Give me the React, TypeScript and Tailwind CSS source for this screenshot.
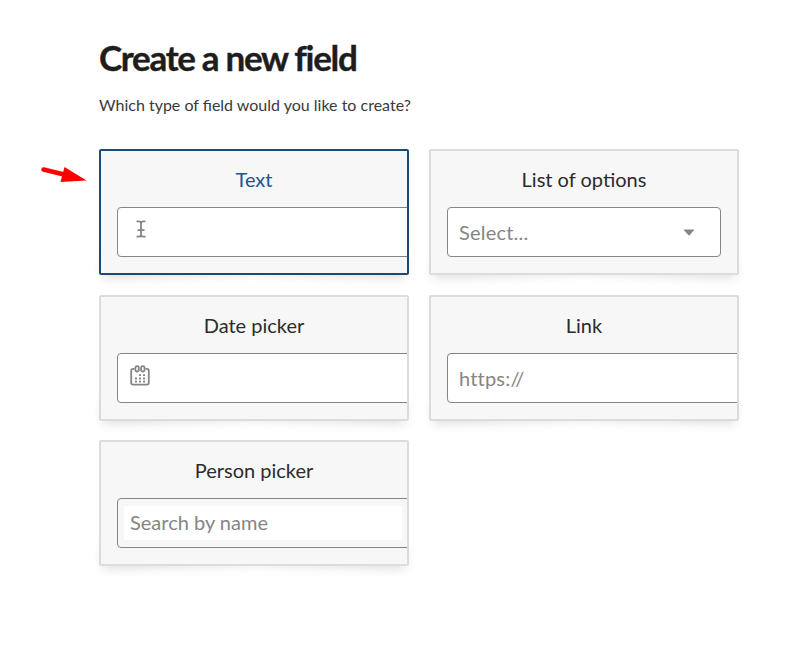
import type { ReactNode } from "react";

type CardProps = { title: string; selected?: boolean; children: ReactNode };

function Card({ title, selected = false, children }: CardProps) {
  return (
    <div className="relative isolate h-[126px] w-[310px]">
      <span className="absolute bottom-[9px] left-[4px] -z-10 h-[20px] w-[150px] -rotate-2 shadow-[0_9px_12px_rgba(0,0,0,0.15)]" />
      <span className="absolute right-[4px] bottom-[9px] -z-10 h-[20px] w-[150px] rotate-2 shadow-[0_9px_12px_rgba(0,0,0,0.15)]" />
      <div
        className={`h-full overflow-hidden rounded-[2px] border-2 bg-[#f7f7f7] pl-4 ${
          selected ? "border-[#1c4a75]" : "border-[#dcdcdc]"
        }`}
      >
        <h2
          className={`-ml-4 flex h-[56px] items-center justify-center text-[20px] leading-6 ${
            selected ? "text-[#21558f]" : "text-[#2b2b2b]"
          }`}
        >
          {title}
        </h2>
        {children}
      </div>
    </div>
  );
}

const field = "flex h-[50px] items-center rounded-[4px] border border-[#858585] text-[20px] text-[#858585]";

function TextCursor() {
  return (
    <svg width="10" height="18" viewBox="0 0 10 18" fill="none" stroke="#858585" strokeWidth="1.8" className="mb-[6px] ml-[17.5px]">
      <path d="M.5 1.3h2.2Q5 1.3 5 3.5v11q0 2.2-2.3 2.2H.5M9.5 1.3H7.3Q5 1.3 5 3.5M5 14.5q0 2.2 2.3 2.2h2.2M1.5 10.2h7" />
    </svg>
  );
}

function Calendar() {
  return (
    <svg width="20" height="21" viewBox="0 0 20 21" fill="none" stroke="#858585" strokeWidth="1.8" className="mb-[5px] ml-[12px]">
      <path d="M4.5 3.8H3Q1.2 3.8 1.2 5.6v12.2q0 1.8 1.8 1.8h14q1.8 0 1.8-1.8V5.6q0-1.8-1.8-1.8h-1.5" />
      <rect x="5.4" y="1.1" width="3.4" height="5.4" rx="1.5" />
      <rect x="11.1" y="1.1" width="3.4" height="5.4" rx="1.5" />
      <path d="M9 10.2h2M13 10.2h2M5 13.5h2M9 13.5h2M13 13.5h2M5 16.7h2M9 16.7h2M13 16.7h2" />
    </svg>
  );
}

export default function App() {
  return (
    <main className="relative h-[648px] w-[809px] overflow-hidden bg-white pt-[35px] pl-[99px] font-['Lato',sans-serif]">
      <h1 className="h-[44px] text-[35px] leading-[44px] font-bold tracking-[-1.3px] text-[#1d1d1d] [-webkit-text-stroke:0.4px_#1d1d1d]">
        Create a new field
      </h1>
      <p className="mt-[14px] h-[24px] text-[16px] leading-[24px] text-[#3a3a3a]">
        Which type of field would you like to create?
      </p>
      <div className="mt-[32px] grid w-[640px] grid-cols-2 gap-x-5 gap-y-[19.67px]">
        <Card title="Text" selected>
          <div className={`${field} w-[310px] bg-white`}>
            <TextCursor />
          </div>
        </Card>
        <Card title="List of options">
          <div className={`${field} w-[274px] justify-between bg-white pr-[25px] pl-[11px]`}>
            <span className="tracking-[0.2px]">Select...</span>
            <svg width="12" height="7" viewBox="0 0 12 7" fill="#858585">
              <path d="M1.5.5h9q1 0 .4.8L6.8 6q-.8.8-1.6 0L1.1 1.3Q.5.5 1.5.5Z" />
            </svg>
          </div>
        </Card>
        <Card title="Date picker">
          <div className={`${field} w-[310px] bg-white`}>
            <Calendar />
          </div>
        </Card>
        <Card title="Link">
          <div className={`${field} w-[310px] bg-white pl-[11px] tracking-[0.2px]`}>https://</div>
        </Card>
        <Card title="Person picker">
          <div className={`${field} w-[310px] pl-[6px]`}>
            <span className="flex h-[34px] w-[278px] items-center bg-white pb-[2px] pl-[6px]">Search by name</span>
          </div>
        </Card>
      </div>
      <svg className="absolute top-[165px] left-[39px]" width="50" height="20" viewBox="0 0 50 20">
        <path d="M4.5 4.5 25 9.5" stroke="#f00" strokeWidth="4.5" strokeLinecap="round" />
        <path d="M25.5 2 47.5 15.5 21.5 17Z" fill="#f00" />
      </svg>
    </main>
  );
}
